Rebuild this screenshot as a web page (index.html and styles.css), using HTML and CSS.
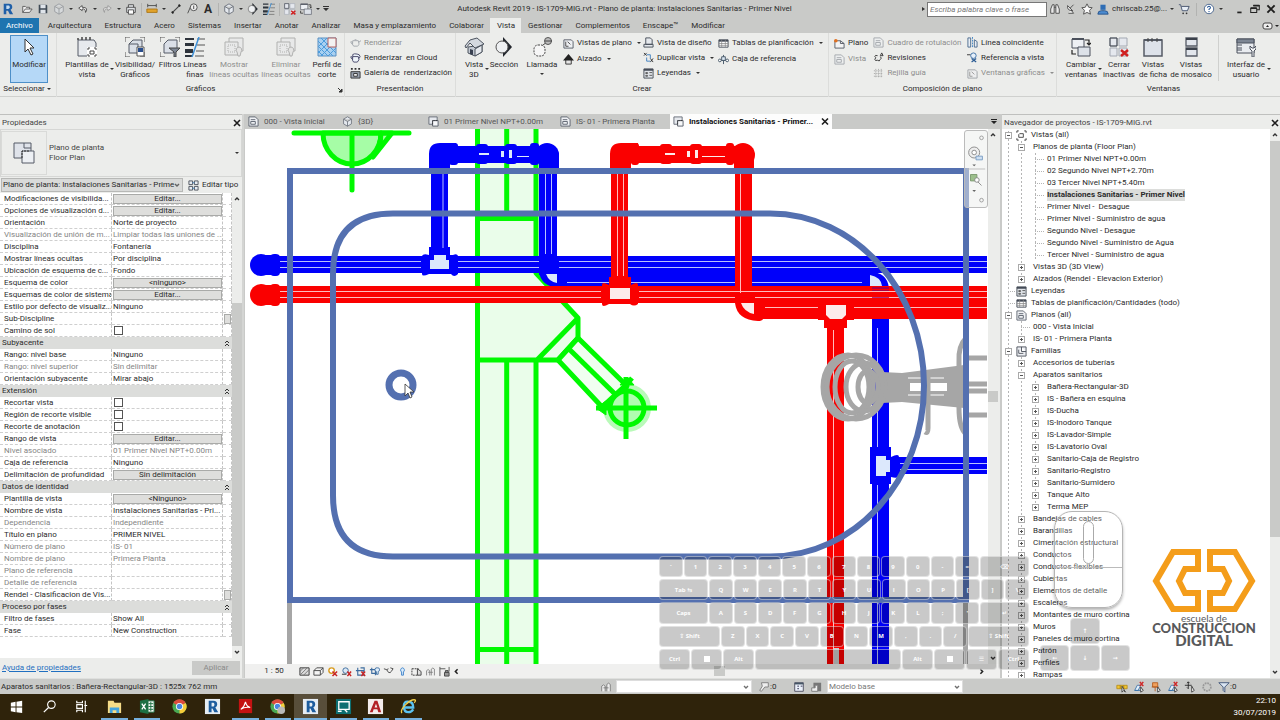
FILE: index.html
```html
<!DOCTYPE html>
<html lang="es">
<head>
<meta charset="utf-8">
<title>Autodesk Revit 2019 - IS-1709-MIG.rvt</title>
<link rel="stylesheet" href="styles.css">
</head>
<body>
<svg class="defs" aria-hidden="true">
  <symbol id="rlogo" viewBox="0 0 14 14"><path d="M2 1h6q4 0 4 4 0 2-2 3l3 5H9L7 9H5v4H2z" fill="#1f5fa8"/><path d="M5 3h3q1 0 1 2T7 7H5z" fill="#c6dcf0"/></symbol>
  <symbol id="open" viewBox="0 0 14 14"><path d="M2 11V4h3l1 1h4v2M2 11l3-4h8l-3 4z" fill="#eee" stroke="#555" stroke-width="1"/></symbol>
  <symbol id="save" viewBox="0 0 14 14"><path d="M2 2h9l1 1v9H2z" fill="#3f4a55"/><path d="M4 2h6v4H4zM4 8h6v4H4z" fill="#dfe4ea"/></symbol>
  <symbol id="cube" viewBox="0 0 14 14"><path d="M7 1l5 3v6l-5 3-5-3V4zM2 4l5 3 5-3M7 7v6" fill="#e4e8ee" stroke="#666c76" stroke-width="1"/></symbol>
  <symbol id="undo" viewBox="0 0 14 14"><path d="M6 3L2 6l4 3V7q4-1 4 4 4-6-4-6z" fill="#f5f5f5" stroke="#444" stroke-width="1"/></symbol>
  <symbol id="redo" viewBox="0 0 14 14"><path d="M8 3l4 3-4 3V7q-4-1-4 4-4-6 4-6z" fill="#ddd" stroke="#999" stroke-width="1"/></symbol>
  <symbol id="print" viewBox="0 0 14 14"><path d="M4 5V2h6v3M2 5h10v6H2z" fill="#dfe2e6" stroke="#444"/><path d="M4 8h6v5H4z" fill="#fff" stroke="#444"/></symbol>
  <symbol id="measure" viewBox="0 0 14 14"><path d="M2 3h10M2 1v4M12 1v4" stroke="#444"/><path d="M1 7h12v4H1z" fill="#e2a32b" stroke="#a87414"/></symbol>
  <symbol id="dimline" viewBox="0 0 14 14"><path d="M3 11l8-8" stroke="#444" stroke-width="1.3"/><path d="M2 10l2 2M10 2l2 2" stroke="#222" stroke-width="2"/></symbol>
  <symbol id="tag" viewBox="0 0 14 14"><path d="M2 12l3-7h2" fill="none" stroke="#444"/><circle cx="9" cy="5" r="4" fill="#eee" stroke="#444"/><path d="M9 3v4" stroke="#333"/></symbol>
  <symbol id="house" viewBox="0 0 20 20"><path d="M4 10v6l7 3 7-4V8z" fill="#c3c9d2" stroke="#4d545f"/><path d="M11 12v7l7-4V8z" fill="#e6e9ee" stroke="#4d545f"/><path d="M1 9l5-6 7-2 7 6-9 4-5-5-4 5z" fill="#d3d8df" stroke="#4d545f"/><path d="M6 12v5l3 1v-5z" fill="#384050"/></symbol>
  <symbol id="section" viewBox="0 0 20 20"><path d="M9 0l9 10-9 10z" fill="#22262d"/><circle cx="8" cy="10" r="6" fill="#eef0f2" stroke="#555"/></symbol>
  <symbol id="thin" viewBox="0 0 20 20"><path d="M0 1h9v2H0zM0 6h9v3H0zM0 12h8v4H0zM0 18h7v2H0z" fill="#2e343c"/><path d="M12 2h8M12 8h8M11 14h8M10 19h9" stroke="#555"/><path d="M14 0L7 20" stroke="#3d8fd6" stroke-width="1.500"/></symbol>
  <symbol id="closew" viewBox="0 0 20 20"><path d="M1 1h7v8H1zM10 1h8v8h-8zM1 11h7v8H1zM10 11h8v8h-8z" fill="#e5e8ee" stroke="#a3a8b2"/><path d="M1 1h7v8H1z" fill="none" stroke="#3c424c"/><path d="M12 13l7 6M19 13l-7 6" stroke="#d02020" stroke-width="2.500"/></symbol>
  <symbol id="switchw" viewBox="0 0 20 20"><path d="M1 2h12v9H1z" fill="#edf0f4" stroke="#4b515c"/><path d="M1 1h12v2H1z" fill="#4b515c"/><path d="M7 10h12v9H7z" fill="#dde2e9" stroke="#4b515c"/><path d="M14 3h4v5M16 6l2 2 2-2M5 17H1v-4" fill="none" stroke="#222" stroke-width="1.200"/></symbol>
  <symbol id="tpl" viewBox="0 0 20 20"><path d="M1 3h16l2 3v13H1z" fill="#e6e9ed" stroke="#555b66"/><path d="M1 3v-2M5 3V0M9 3V0M13 3V0" stroke="#444" stroke-width="1.500"/><path d="M10 10h10v10H10z" fill="#fff"/><path d="M11 13V11h2M17 11h2v2M11 17v2h2M19 17v2h-2M13 14h4v3h-4z" fill="none" stroke="#444"/></symbol>
  <symbol id="vis" viewBox="0 0 20 20"><path d="M0 5V0h5M15 0h5v5M0 15v5h5M20 15v5h-5" fill="none" stroke="#555"/><path d="M4 7l4-4h9v9l-4 4H4z" fill="#dadfe7" stroke="#555b66"/><path d="M4 7h9v9" fill="none" stroke="#555b66"/><path d="M12 10h7v9h-7z" fill="#fff" stroke="#555"/><path d="M13 11h5v4h-5z" fill="#2a4e8c"/></symbol>
  <symbol id="filter" viewBox="0 0 20 20"><path d="M0 5V0h5M15 0h5v5M0 15v5h5" fill="none" stroke="#555"/><path d="M4 7l4-4h9v9l-4 4H4z" fill="#dadfe7" stroke="#555b66"/><path d="M9 11h11l-4 4v5h-2v-5z" fill="#7d8694" stroke="#444"/></symbol>
  <symbol id="hid" viewBox="0 0 20 20"><path d="M5 5V1h14v13h-4M1 5h13v13H1z" fill="#e6e7e8" stroke="#777"/><path d="M4 8h7v7H4z" fill="none" stroke="#777" stroke-dasharray="1 1"/><path d="M15 10a3 3 0 0 1 2 5l-1 4h-2l-1-4a3 3 0 0 1 2-5z" fill="#ddd" stroke="#777"/></symbol>
  <symbol id="profile" viewBox="0 0 20 20"><path d="M1 1h18v18H1z" fill="#a9d0f0" stroke="#5b8fc0"/><path d="M1 4l15 15M1 9l10 10M1 14l5 5M4 1l15 15M1 10l9-9M1 16L16 1M4 19L19 4M11 19l8-8" stroke="#4c9cdc" stroke-width="1"/><path d="M11 1h8v9h-8z" fill="#f2f2f2" stroke="#b06060"/></symbol>
  <symbol id="callout" viewBox="0 0 20 20"><rect x="2" y="8" width="11" height="11" rx="4" fill="#f6f6f6" stroke="#444" stroke-dasharray="2 1"/><path d="M11 8l4-3" stroke="#444"/><circle cx="16" cy="4" r="3.500" fill="#bbb" stroke="#555"/><path d="M13 4h7" stroke="#444"/></symbol>
  <symbol id="tabsw" viewBox="0 0 20 20"><path d="M1 3h18v16H1z" fill="#dde2ea" stroke="#555b66" stroke-width="1.500"/><path d="M1 3h18" stroke="#555b66" stroke-width="2"/><path d="M5 1v4M9 1v4M14 1v4" stroke="#444"/></symbol>
  <symbol id="tilew" viewBox="0 0 20 20"><path d="M5 1h11v8H5zM5 11h11v8H5z" fill="#e2e6ec" stroke="#555b66" stroke-width="1.300"/><path d="M5 2h11M5 12h11" stroke="#3b414b" stroke-width="2"/></symbol>
  <symbol id="iface" viewBox="0 0 20 20"><path d="M1 2h17v14H1z" fill="#e9ecf0" stroke="#4b515c"/><path d="M1 2h17v4H1zM1 8h5M1 11h5M1 13h5" stroke="#4b515c" fill="#7d8694"/><path d="M14 9v3l2 2v6h2v-6l2-2V9l-2 2h-2z" fill="#f3f5f7" stroke="#4b515c"/></symbol>
  <symbol id="arrow" viewBox="0 0 20 20"><path d="M6 2v13l3-3 3 6 2-1-3-6h4z" fill="#fff" stroke="#333"/></symbol>
  <symbol id="teapot" viewBox="0 0 12 12"><path d="M3 4h6q2 5-1 6H4Q2 9 3 4zM3 6Q0 4 1 6t2 2M9 6l3-2M5 3h2" fill="none" stroke="#5b6470"/></symbol>
  <symbol id="cloudpot" viewBox="0 0 12 12"><path d="M3 5Q2 2 5 2t5 1q2 2 0 4M3 5h6q2 4-1 6H4Q2 10 3 5zM3 6Q0 4 1 6t2 2" fill="#eef4fa" stroke="#446"/></symbol>
  <symbol id="gallery" viewBox="0 0 12 12"><path d="M1 1h2M5 1h2M9 1h2" stroke="#333" stroke-width="2"/><path d="M1 4h10v7H1z" fill="#9aa3b0" stroke="#333"/><path d="M4 6h4v3H4z" fill="#eee" stroke="#333"/></symbol>
  <symbol id="plan" viewBox="0 0 12 12"><path d="M1 2h8l2 2v7H1z" fill="#eef0f3" stroke="#555b66"/><path d="M3 4v5h3M5 4l3 3" fill="none" stroke="#444"/></symbol>
  <symbol id="elev" viewBox="0 0 12 12"><path d="M3 6h6v5H3z" fill="#e5e5e5" stroke="#333"/><path d="M6 0l6 7H0z" fill="#222"/></symbol>
  <symbol id="draft" viewBox="0 0 12 12"><path d="M3 1h5l2 2v5H3zM1 8h10v3H1z" fill="#e6e9ed" stroke="#444b57"/></symbol>
  <symbol id="dup" viewBox="0 0 12 12"><path d="M1 1l3 3M4 1L1 4M8 7l3 4M11 7l-3 4" stroke="#333"/><path d="M4 3h4v4M4 6v4h4" fill="none" stroke="#3d7fc0"/></symbol>
  <symbol id="legend" viewBox="0 0 12 12"><path d="M1 1h10v10H1z" fill="#dfe3e8" stroke="#444b57"/><path d="M1 2h10" stroke="#444b57" stroke-width="2"/><path d="M3 5h2v1H3zM3 8h2v1H3zM7 5h3M7 8h3" stroke="#555" fill="none"/></symbol>
  <symbol id="sched" viewBox="0 0 12 12"><path d="M1 2h10v8H1z" fill="#fff" stroke="#444b57"/><path d="M1 3h10" stroke="#444b57" stroke-width="2"/><path d="M1 6h10M1 8h10M4 2v8M8 2v8" stroke="#888" stroke-width=".8"/></symbol>
  <symbol id="scope" viewBox="0 0 12 12"><path d="M6 1v10M1 7h10" stroke="#456"/><path d="M4 3h4v4H4z" fill="#dce8f4" stroke="#456"/><circle cx="2" cy="7" r="1.500" fill="#fff" stroke="#456"/><circle cx="10" cy="7" r="1.500" fill="#fff" stroke="#456"/></symbol>
  <symbol id="sheet" viewBox="0 0 12 12"><path d="M1 3h6l4 3v5H1z" fill="#f4f4f4" stroke="#555b66"/><path d="M7 3v3h4" fill="none" stroke="#555b66"/><circle cx="2" cy="3" r="2" fill="#e07020"/></symbol>
  <symbol id="sheetp" viewBox="0 0 12 12"><path d="M1 1h7l3 3v7H1z" fill="#eff1f4" stroke="#5d6470"/><path d="M3 4h5M3 6v3h5V6z" fill="none" stroke="#5d6470"/></symbol>
  <symbol id="rev" viewBox="0 0 12 12"><path d="M5 4q-3-1-3 1 2 1 0 3 0 2 3 1 2 2 3-1 2-1 0-3" fill="none" stroke="#333"/><path d="M8 4l1.500-3L11 4z" fill="#fafafa" stroke="#333"/></symbol>
  <symbol id="grid" viewBox="0 0 12 12"><path d="M3 1v10M6 1v10M9 1v10M1 3h10M1 6h10M1 9h10" stroke="#555" stroke-dasharray="1 1"/></symbol>
  <symbol id="match" viewBox="0 0 12 12"><path d="M1 1h3v10H1zM8 3l3 2v6H8z" fill="#e8eef5" stroke="#4a6a8c"/><path d="M6 0v12" stroke="#3b82c4" stroke-dasharray="2 1"/></symbol>
  <symbol id="vref" viewBox="0 0 12 12"><path d="M0 3h4" stroke="#333"/><circle cx="7" cy="4" r="3" fill="#e6f0fa" stroke="#3b6ea5"/><path d="M5 7l5 4M10 7l-5 4" stroke="#2b5c94" stroke-width="1.300"/></symbol>
  <symbol id="bino" viewBox="0 0 14 14"><path d="M2 12V7l2-5h2v10zM8 12V2h2l2 5v5zM6 5h2" fill="#e9e9e9" stroke="#444"/></symbol>
  <symbol id="dish" viewBox="0 0 14 14"><path d="M3 3q-1 6 6 6zM6 6l4-4M4 12h6l-3-4" fill="#eee" stroke="#444"/></symbol>
  <symbol id="star" viewBox="0 0 14 14"><path d="M7 1l2 4 4 .500-3 3 1 4.500-4-2-4 2 1-4.500-3-3L5 5z" fill="#fafafa" stroke="#444"/></symbol>
  <symbol id="user" viewBox="0 0 14 14"><path d="M4 2h6v6H4z" fill="#2e6db5"/><path d="M1 13q0-4 4-4h4q4 0 4 4z" fill="#4c8bd0" stroke="#234f86"/></symbol>
  <symbol id="cart" viewBox="0 0 14 14"><path d="M1 2h2l2 7h6l2-5H4" fill="#e8eef6" stroke="#3c4a66"/><circle cx="6" cy="12" r="1" fill="#333"/><circle cx="10" cy="12" r="1" fill="#333"/></symbol>
  <symbol id="help" viewBox="0 0 14 14"><circle cx="7" cy="7" r="5.500" fill="#fff" stroke="#3c5a86"/><path d="M5.200 5.500Q5.500 3.700 7 3.700t1.700 1.600Q8.700 6.500 7 7.300v1" fill="none" stroke="#1d4f92" stroke-width="1.200"/><circle cx="7" cy="10" r=".8" fill="#1d4f92"/></symbol>
  <symbol id="restore" viewBox="0 0 14 14"><path d="M5 3h7v5H9M2 6h7v5H2z" fill="none" stroke="#222" stroke-width="1.200"/><path d="M5 3h7M2 6h7" stroke="#222" stroke-width="2"/></symbol>
  <symbol id="x" viewBox="0 0 10 10"><path d="M2 2l6 6M8 2L2 8" stroke="#1d1d1d" stroke-width="1.600"/></symbol>
  <symbol id="up" viewBox="0 0 10 10"><path d="M3 6l2-2 2 2" fill="none" stroke="#333" stroke-width="1.400"/></symbol>
  <symbol id="down" viewBox="0 0 10 10"><path d="M3 4l2 2 2-2" fill="none" stroke="#333" stroke-width="1.400"/></symbol>
  <symbol id="tri" viewBox="0 0 8 8"><path d="M2 3h4L4 5z" fill="#333"/></symbol>
  <symbol id="chev2" viewBox="0 0 8 8"><path d="M2 4l2-2 2 2M2 7l2-2 2 2" fill="none" stroke="#333"/></symbol>
  <symbol id="etype" viewBox="0 0 12 12"><path d="M1 1h4v4H1zM7 1h4v4H7zM1 7h4v4H1zM7 7h4v4H7z" fill="#e8ecf2" stroke="#4b515c"/><path d="M5 3h2M5 9h2" stroke="#3b82c4"/></symbol>
  <symbol id="views" viewBox="0 0 12 12"><path d="M1 3V1h2M9 1h2v2M1 9v2h2M11 9v2H9" fill="none" stroke="#333"/><path d="M3 5l1-1h4v4H3z" fill="#fff" stroke="#444"/></symbol>
  <symbol id="fam" viewBox="0 0 12 12"><path d="M1 1h10v10H1zM6 1v5h5M3 4v4h5" fill="#eceef2" stroke="#4b515c"/></symbol>
  <symbol id="fplan" viewBox="0 0 12 12"><path d="M1 1h9v8H1z" fill="#e6e9ee" stroke="#666c77"/><path d="M5 5h6v6H5z" fill="#f7f8fa" stroke="#555b66"/><path d="M5 9V5h5" fill="none" stroke="#222" stroke-dasharray="1 1"/></symbol>
  <symbol id="box" viewBox="0 0 12 12"><path d="M1 5l3-3h7v5l-3 3H1zM1 5h7v5M8 5l3-3" fill="#f4f4f4" stroke="#444"/></symbol>
  <symbol id="detail" viewBox="0 0 12 12"><path d="M1 2h10v8H1z" fill="#ddd" stroke="#333"/><path d="M1 6l4-4M1 10l8-8M5 10l6-6" stroke="#777"/></symbol>
  <symbol id="sun" viewBox="0 0 12 12"><circle cx="5" cy="5" r="3" fill="#fff" stroke="#d99a1c" stroke-width="1.500"/><path d="M6 6l5 5M11 6l-5 5" stroke="#c82323" stroke-width="1.600"/></symbol>
  <symbol id="shadow" viewBox="0 0 12 12"><circle cx="5" cy="5" r="3" fill="#dce9f5" stroke="#3d6c9f"/><path d="M1 9h5" stroke="#333"/><path d="M7 6l4 5M11 6l-4 5" stroke="#c82323" stroke-width="1.600"/></symbol>
  <symbol id="cropx" viewBox="0 0 12 12"><path d="M1 5h8v5M3 2v8h8M6 2h4v4" fill="none" stroke="#3d6c9f" stroke-width="1.200"/><path d="M7 6l4 5M11 6l-4 5" stroke="#c82323" stroke-width="1.600"/></symbol>
  <symbol id="crop" viewBox="0 0 12 12"><path d="M1 4h6v6M3 2v6h6" fill="none" stroke="#3d6c9f" stroke-width="1.200"/><path d="M9 2a2 2 0 0 1 1 4v3H8V6a2 2 0 0 1 1-4z" fill="#e0effb" stroke="#3d6c9f"/></symbol>
  <symbol id="glass" viewBox="0 0 12 12"><path d="M1 3l3 1 2 3q2 1 3-1l2-3-3-1M4 4l2-1" fill="none" stroke="#444"/></symbol>
  <symbol id="bulb" viewBox="0 0 12 12"><path d="M6 2a2.500 2.500 0 0 1 1 4.500V10H5V6.500A2.500 2.500 0 0 1 6 2z" fill="#d9ecfc" stroke="#3a80c8"/></symbol>
  <symbol id="dots" viewBox="0 0 12 12"><path d="M1 3h7v7H1z" fill="none" stroke="#333" stroke-dasharray="2 1"/><path d="M7 3l4 3v4H7z" fill="#ddd" stroke="#444"/></symbol>
  <symbol id="lock" viewBox="0 0 12 12"><path d="M1 1v10M1 3h6M11 1v5" stroke="#555"/><path d="M6 7h5v4H6zM7 7V5h3v2" fill="#999" stroke="#444"/></symbol>
  <symbol id="people" viewBox="0 0 14 14"><path d="M2 12V6q2-3 4 0v6M8 12V4q2-3 4 0v8M4 8h6" fill="#eee" stroke="#777"/></symbol>
  <symbol id="key" viewBox="0 0 14 14"><path d="M4 2h8v5H8l-4 5-2-1 3-5z" fill="#eee" stroke="#777"/></symbol>
  <symbol id="wins" viewBox="0 0 14 14"><path d="M2 2h10v10H2z" fill="#eaf0fa" stroke="#445"/><path d="M2 3h10" stroke="#456" stroke-width="2"/><path d="M5 6h2M5 9h2M9 6h2" stroke="#224"/></symbol>
  <symbol id="optset" viewBox="0 0 14 14"><path d="M4 2h9v10H4z" fill="#777"/><path d="M2 8h4V5h3v7H2z" fill="#eee" stroke="#777"/></symbol>
  <symbol id="chain" viewBox="0 0 14 14"><path d="M1 5h4v4H1zM5 5h4v4H5zM9 5h4v4H9z" fill="#f3c530" stroke="#b58d1c"/><path d="M7 6v7l2-2 2 2z" fill="#fff" stroke="#333"/></symbol>
  <symbol id="selx" viewBox="0 0 14 14"><path d="M2 11l3-6h4l-3 6zM2 11h9" fill="#e5f0fa" stroke="#3872aa"/><path d="M8 1l4 5M12 1L8 6" stroke="#cf2727" stroke-width="1.800"/><path d="M9 7v6l3-2z" fill="#fff" stroke="#333"/></symbol>
  <symbol id="pin" viewBox="0 0 14 14"><path d="M3 2h6v5H3zM2 7h8M6 7v5" fill="#f0a05c" stroke="#b35a1d"/><path d="M9 7v6l3-2z" fill="#fff" stroke="#333"/></symbol>
  <symbol id="drag" viewBox="0 0 14 14"><path d="M5 1v8M1 5h8M3.500 2.500L5 1l1.500 1.500M3.500 7.500L5 9" fill="none" stroke="#222"/><path d="M9 6v7l3-2z" fill="#fff" stroke="#333"/></symbol>
  <symbol id="ring" viewBox="0 0 14 14"><circle cx="7" cy="7" r="4.500" fill="none" stroke="#999" stroke-width="2" stroke-dasharray="2 1"/></symbol>
  <symbol id="funnel" viewBox="0 0 14 14"><path d="M1 2h12L8 7v6l-2-2V7z" fill="#dbe6f3" stroke="#334a70"/></symbol>
  <symbol id="chrome" viewBox="0 0 18 18"><circle cx="9" cy="9" r="7.500" fill="#4aa853"/><path d="M9 9L2.500 5.200A7.500 7.500 0 0 1 15.500 5.200z" fill="#dd4b3e"/><path d="M9 9l6.500-3.800A7.500 7.500 0 0 1 9 16.500z" fill="#f6cd3a"/><circle cx="9" cy="9" r="3.800" fill="#fff"/><circle cx="9" cy="9" r="2.900" fill="#4a86e0"/></symbol>
  <symbol id="revit" viewBox="0 0 18 18"><path d="M1 1h16v16H1z" fill="#e6edf4"/><path d="M5 3h5q4 0 4 4 0 2-2 3l3 5h-4l-2-4H8v4H5z" fill="#1c5c9e"/><path d="M8 5h2q1 0 1 2t-1 2H8z" fill="#e6edf4"/></symbol>
</svg>

<header class="titlebar">
  <div class="qat">
    <button aria-label="Revit"><svg><use href="#rlogo"/></svg></button><span class="s3"></span>
    <button aria-label="Abrir"><svg><use href="#open"/></svg></button>
    <button aria-label="Guardar"><svg><use href="#save"/></svg></button>
    <button class="dis" aria-label="Sincronizar"><svg><use href="#cube"/></svg></button>
    <button class="ar" aria-label="Más"><svg><use href="#tri"/></svg></button>
    <button aria-label="Deshacer"><svg><use href="#undo"/></svg></button>
    <button class="ar" aria-label="Más"><svg><use href="#tri"/></svg></button>
    <button aria-label="Rehacer"><svg><use href="#redo"/></svg></button>
    <button class="ar" aria-label="Más"><svg><use href="#tri"/></svg></button>
    <button aria-label="Imprimir"><svg><use href="#print"/></svg></button><i class="sep"></i>
    <button aria-label="Medir"><svg><use href="#measure"/></svg></button>
    <button class="ar" aria-label="Más"><svg><use href="#tri"/></svg></button>
    <button aria-label="Cota"><svg><use href="#dimline"/></svg></button>
    <button aria-label="Etiqueta"><svg><use href="#tag"/></svg></button>
    <button class="big" aria-label="Texto">A</button><i class="sep"></i>
    <button aria-label="Vista 3D"><svg><use href="#cube"/></svg></button>
    <button class="ar" aria-label="Más"><svg><use href="#tri"/></svg></button>
    <button aria-label="Sección"><svg><use href="#section"/></svg></button>
    <button aria-label="Líneas finas"><svg><use href="#thin"/></svg></button><i class="sep"></i>
    <button aria-label="Cerrar inactivas"><svg><use href="#closew"/></svg></button>
    <button aria-label="Cambiar ventanas"><svg><use href="#switchw"/></svg></button>
    <button class="ar" aria-label="Más"><svg><use href="#tri"/></svg></button>
    <button class="ar" aria-label="Personalizar"><svg viewBox="0 0 8 8"><path d="M1 1h6v1H1zM1 3h6L4 6z" fill="#333"/></svg></button>
  </div>
  <h1>Autodesk Revit 2019 - IS-1709-MIG.rvt - Plano de planta: Instalaciones Sanitarias - Primer Nivel</h1>
  <div class="info">
    <svg class="tiny" viewBox="0 0 8 8"><path d="M3 2l3 2-3 2z" fill="#333"/></svg>
    <input type="search" placeholder="Escriba palabra clave o frase" aria-label="Buscar">
    <button aria-label="Buscar"><svg><use href="#bino"/></svg></button>
    <button aria-label="Comunicación"><svg><use href="#dish"/></svg></button>
    <button aria-label="Favoritos"><svg><use href="#star"/></svg></button>
    <button aria-label="Usuario"><svg><use href="#user"/></svg></button>
    <span class="usr">chriscab.25@...</span>
    <button class="ar" aria-label="Cuenta"><svg><use href="#tri"/></svg></button>
    <button aria-label="Tienda"><svg><use href="#cart"/></svg></button><i class="sep"></i>
    <button aria-label="Ayuda"><svg><use href="#help"/></svg></button>
    <button class="ar" aria-label="Más"><svg><use href="#tri"/></svg></button>
    <span class="s6"></span>
    <button aria-label="Minimizar"><svg viewBox="0 0 14 14"><path d="M5 11h5" stroke="#222" stroke-width="2"/></svg></button>
    <button aria-label="Restaurar"><svg><use href="#restore"/></svg></button>
    <button aria-label="Cerrar"><svg><use href="#x"/></svg></button>
  </div>
</header>

<nav class="tabs">
  <button class="file">Archivo</button><button>Arquitectura</button><button>Estructura</button><button>Acero</button><button>Sistemas</button><button>Insertar</button><button>Anotar</button><button>Analizar</button><button>Masa y emplazamiento</button><button>Colaborar</button><button class="on">Vista</button><button>Gestionar</button><button>Complementos</button><button>Enscape™</button><button>Modificar</button>
  <svg class="pill" viewBox="0 0 18 10"><rect x="1" y="2" width="9" height="6" rx="2" fill="#eee" stroke="#444"/><path d="M4 6l1.500-2L7 6zM13 4h4l-2 2z" fill="#222"/></svg>
</nav>

<section class="ribbon">
  <div class="rp"><div class="rb">
    <button class="lg w38 cur"><svg><use href="#arrow"/></svg><span>Modificar</span></button>
  </div><h2>Seleccionar <svg class="t8"><use href="#tri"/></svg></h2></div>

  <div class="rp"><div class="rb">
    <button class="lg w50"><svg><use href="#tpl"/></svg><span>Plantillas de<br>vista</span><svg class="t8 side"><use href="#tri"/></svg></button>
    <button class="lg w46"><svg><use href="#vis"/></svg><span>Visibilidad/<br>Gráficos</span></button>
    <button class="lg w24"><svg><use href="#filter"/></svg><span>Filtros</span></button>
    <button class="lg w26"><svg><use href="#thin"/></svg><span>Líneas<br>finas</span></button>
    <button class="lg w52 off" disabled><svg><use href="#hid"/></svg><span>Mostrar<br>líneas ocultas</span></button>
    <button class="lg w52 off" disabled><svg><use href="#hid"/></svg><span>Eliminar<br>líneas ocultas</span></button>
    <button class="lg w30"><svg><use href="#profile"/></svg><span>Perfil de<br>corte</span></button>
  </div><h2>Gráficos</h2><svg class="launch" viewBox="0 0 6 6"><path d="M1 1l3 3M5 2v3H2z" stroke="#333" fill="#333"/></svg></div>

  <div class="rp"><div class="rb">
    <div class="col">
      <button class="off" disabled><svg><use href="#teapot"/></svg>Renderizar</button>
      <button><svg><use href="#cloudpot"/></svg>Renderizar&nbsp; en Cloud</button>
      <button><svg><use href="#gallery"/></svg>Galería de&nbsp; renderización</button>
    </div>
  </div><h2>Presentación</h2></div>

  <div class="rp"><div class="rb">
    <button class="lg w26"><svg><use href="#house"/></svg><span>Vista<br>3D</span><svg class="t8 side"><use href="#tri"/></svg></button>
    <button class="lg w34"><svg><use href="#section"/></svg><span>Sección</span></button>
    <button class="lg w42"><svg><use href="#callout"/></svg><span>Llamada</span><svg class="t8"><use href="#tri"/></svg></button>
    <div class="col c80">
      <button><svg><use href="#plan"/></svg>Vistas de plano<svg class="t8"><use href="#tri"/></svg></button>
      <button><svg><use href="#elev"/></svg>Alzado<svg class="t8"><use href="#tri"/></svg></button>
    </div>
    <div class="col c75">
      <button><svg><use href="#draft"/></svg>Vista de diseño</button>
      <button><svg><use href="#dup"/></svg>Duplicar vista<svg class="t8"><use href="#tri"/></svg></button>
      <button><svg><use href="#legend"/></svg>Leyendas<svg class="t8"><use href="#tri"/></svg></button>
    </div>
    <div class="col">
      <button><svg><use href="#sched"/></svg>Tablas de planificación<svg class="t8"><use href="#tri"/></svg></button>
      <button><svg><use href="#scope"/></svg>Caja de referencia</button>
    </div>
  </div><h2>Crear</h2></div>

  <div class="rp"><div class="rb">
    <div class="col c40">
      <button><svg><use href="#sheet"/></svg>Plano</button>
      <button class="off" disabled><svg><use href="#sheetp"/></svg>Vista</button>
    </div>
    <div class="col c95">
      <button class="off" disabled><svg><use href="#sheetp"/></svg>Cuadro de rotulación</button>
      <button><svg><use href="#rev"/></svg>Revisiones</button>
      <button class="off" disabled><svg><use href="#grid"/></svg>Rejilla guía</button>
    </div>
    <div class="col">
      <button><svg><use href="#match"/></svg>Línea coincidente</button>
      <button><svg><use href="#vref"/></svg>Referencia a vista</button>
      <button class="off" disabled><svg><use href="#plan"/></svg>Ventanas gráficas<svg class="t8"><use href="#tri"/></svg></button>
    </div>
  </div><h2>Composición de plano</h2></div>

  <div class="rp last"><div class="rb">
    <button class="lg w38"><svg><use href="#switchw"/></svg><span>Cambiar<br>ventanas</span><svg class="t8 side"><use href="#tri"/></svg></button>
    <button class="lg w38"><svg><use href="#closew"/></svg><span>Cerrar<br>inactivas</span></button>
    <button class="lg w30"><svg><use href="#tabsw"/></svg><span>Vistas<br>de ficha</span></button>
    <button class="lg w46"><svg><use href="#tilew"/></svg><span>Vistas<br>de mosaico</span></button>
    <i class="vsep"></i>
    <button class="lg w46"><svg><use href="#iface"/></svg><span>Interfaz de<br>usuario</span><svg class="t8 side"><use href="#tri"/></svg></button>
  </div><h2>Ventanas</h2></div>
</section>

<main>
  <aside class="props">
    <header class="ph"><h2>Propiedades</h2><button aria-label="Cerrar propiedades"><svg><use href="#x"/></svg></button></header>
    <button class="type">
      <span class="thumb"><svg viewBox="0 0 22 22"><path d="M1 1h17v15H1z" fill="#dfe3ea" stroke="#555b66"/><path d="M11 1v5h7" fill="none" stroke="#555b66"/><path d="M9 9h12v12H9z" fill="#edf0f4" stroke="#555b66"/><path d="M9 16V9h8" fill="none" stroke="#333" stroke-dasharray="2 1"/></svg></span>
      <span class="tn">Plano de planta<br>Floor Plan</span><svg class="t8"><use href="#tri"/></svg>
    </button>
    <div class="inst">
      <span class="combo"><select aria-label="Instancia"><option>Plano de planta: Instalaciones Sanitarias - Prime</option></select><svg><use href="#down"/></svg></span>
      <button><svg><use href="#etype"/></svg>Editar tipo</button>
    </div>
    <div class="pbody">
      <div class="tablewrap">
      <table>
        <colgroup><col class="k"><col class="v"><col class="b"></colgroup>
        <tr><th>Modificaciones de visibilida...</th><td><button>Editar...</button></td><td></td></tr>
        <tr><th>Opciones de visualización d...</th><td><button>Editar...</button></td><td></td></tr>
        <tr><th>Orientación</th><td>Norte de proyecto</td><td></td></tr>
        <tr class="ro"><th>Visualización de unión de m...</th><td>Limpiar todas las uniones de ...</td><td></td></tr>
        <tr><th>Disciplina</th><td>Fontanería</td><td></td></tr>
        <tr><th>Mostrar líneas ocultas</th><td>Por disciplina</td><td></td></tr>
        <tr><th>Ubicación de esquema de c...</th><td>Fondo</td><td></td></tr>
        <tr><th>Esquema de color</th><td><button>&lt;ninguno&gt;</button></td><td></td></tr>
        <tr><th>Esquemas de color de sistema</th><td><button>Editar...</button></td><td></td></tr>
        <tr><th>Estilo por defecto de visualiz...</th><td>Ninguno</td><td></td></tr>
        <tr><th>Sub-Discipline</th><td></td><td><button aria-label="Asociar"></button></td></tr>
        <tr><th><label for="c1">Camino de sol</label></th><td><input type="checkbox" id="c1"></td><td></td></tr>
        <tr class="g"><th colspan="2">Subyacente</th><td><svg><use href="#chev2"/></svg></td></tr>
        <tr><th>Rango: nivel base</th><td>Ninguno</td><td></td></tr>
        <tr class="ro"><th>Rango: nivel superior</th><td>Sin delimitar</td><td></td></tr>
        <tr><th>Orientación subyacente</th><td>Mirar abajo</td><td></td></tr>
        <tr class="g"><th colspan="2">Extensión</th><td><svg><use href="#chev2"/></svg></td></tr>
        <tr><th><label for="c2">Recortar vista</label></th><td><input type="checkbox" id="c2"></td><td></td></tr>
        <tr><th><label for="c3">Región de recorte visible</label></th><td><input type="checkbox" id="c3"></td><td></td></tr>
        <tr><th><label for="c4">Recorte de anotación</label></th><td><input type="checkbox" id="c4"></td><td></td></tr>
        <tr><th>Rango de vista</th><td><button>Editar...</button></td><td></td></tr>
        <tr class="ro"><th>Nivel asociado</th><td>01 Primer Nivel NPT+0.00m</td><td></td></tr>
        <tr><th>Caja de referencia</th><td>Ninguno</td><td></td></tr>
        <tr><th>Delimitación de profundidad</th><td><button>Sin delimitación</button></td><td></td></tr>
        <tr class="g"><th colspan="2">Datos de identidad</th><td><svg><use href="#chev2"/></svg></td></tr>
        <tr><th>Plantilla de vista</th><td><button>&lt;Ninguno&gt;</button></td><td></td></tr>
        <tr><th>Nombre de vista</th><td>Instalaciones Sanitarias - Pri...</td><td></td></tr>
        <tr class="ro"><th>Dependencia</th><td>Independiente</td><td></td></tr>
        <tr><th>Título en plano</th><td>PRIMER NIVEL</td><td></td></tr>
        <tr class="ro"><th>Número de plano</th><td>IS- 01</td><td></td></tr>
        <tr class="ro"><th>Nombre de plano</th><td>Primera Planta</td><td></td></tr>
        <tr class="ro"><th>Plano de referencia</th><td></td><td></td></tr>
        <tr class="ro"><th>Detalle de referencia</th><td></td><td></td></tr>
        <tr><th>Rendel - Clasificacion de Vis...</th><td></td><td><button aria-label="Asociar"></button></td></tr>
        <tr class="g"><th colspan="2">Proceso por fases</th><td><svg><use href="#chev2"/></svg></td></tr>
        <tr><th>Filtro de fases</th><td>Show All</td><td></td></tr>
        <tr><th>Fase</th><td>New Construction</td><td></td></tr>
      </table>
      </div>
      <div class="sb"><svg><use href="#up"/></svg><i class="gap"></i><i class="th"></i><svg><use href="#down"/></svg></div>
    </div>
    <footer class="pf"><a href="#ayuda">Ayuda de propiedades</a><button disabled>Aplicar</button></footer>
  </aside>

  <section class="work">
    <div class="vtabs">
      <button><svg><use href="#sheetp"/></svg>000 - Vista Inicial</button>
      <button><svg><use href="#cube"/></svg>{3D}</button>
      <button><svg><use href="#fplan"/></svg>01 Primer Nivel NPT+0.00m</button>
      <button><svg><use href="#sheetp"/></svg>IS- 01 - Primera Planta</button>
      <button class="on"><svg><use href="#fplan"/></svg>Instalaciones Sanitarias - Primer...<svg class="cl"><use href="#x"/></svg></button>
      <svg class="more" viewBox="0 0 8 8"><path d="M1 1h6v1H1zM1 3h6L4 6z" fill="#222"/></svg>
    </div>
    <div class="cv">
      <svg class="draw" viewBox="245 129 743 535" preserveAspectRatio="xMinYMin slice" role="img" aria-label="Plano de instalaciones sanitarias">
        <g stroke="#00f900" stroke-width="5" fill="none" stroke-linejoin="round">
          <path d="M323 133a29 31 0 0 0 58 0z" fill="#a6fda6"/>
          <path d="M381 133h11l-19 24q8-11 8-24z" fill="#a6fda6"/>
          <path d="M294 133h115M352 133v57M379 133h14" stroke-linecap="round"/>
          <path d="M477 120h59v153l42 45v20l-20 22h-22v310h-59z" fill="#eafdea" stroke="none"/>
          <path d="M477.500 120v550M536 120v153l42 45v20l-20 22h-81M536 360v310M506.700 120v91M506.700 360v310M477 218.500h59M578 318l-41 42M477 649.500h59"/>
          <circle cx="627" cy="408" r="24" fill="#b9fab9" stroke="none"/>
          <path d="M578 338l49 48-24 22-45-48z" fill="#f0fff0"/>
          <path d="M568 348l47 46"/>
          <circle cx="627" cy="408" r="17" fill="#b0fdb0"/>
          <path d="M596 408h61M626 377v62M601 408l26-24 5-6"/>
          <path d="M620 385l7-8 7 8zM596 408l10-7v14z" fill="#00f900" stroke-width="1"/>
        </g>
        <g fill="#0000fa">
          <circle cx="261" cy="265" r="11"/><rect x="261" y="255" width="17" height="20"/><rect x="270" y="254" width="10" height="22" rx="4"/>
          <path d="M278 256h709v17H278z"/><path d="M558 272h318v15H558z"/>
          <path d="M429 168v-14q0-11 11-11h16v3h87q16-2 16 10v12h-20v-5H450v5z"/>
          <rect x="449" y="143" width="9" height="22" rx="3"/><rect x="476" y="144" width="12" height="20" rx="3"/><rect x="505" y="144" width="12" height="20" rx="3"/><rect x="530" y="143" width="9" height="22" rx="3"/><circle cx="547" cy="155" r="12"/>
          <path d="M431 160h17v90h-17zM539 160h18v115h-18z"/>
          <path d="M429 247h21v8h3q5-2 5 2v17q-4 4-7 0h-22q-7 3-7 0v-17q0-4 7-2z"/>
          <path d="M539 272q2 14 19 16h5v-16zM870 272q17 0 19 16v14h-17z"/>
          <path d="M872 290h17v380h-17z"/>
          <path d="M870 447h21v10q8-4 8 0v18q0 4-8 2v7h-21z"/><path d="M898 457h89v17h-89z"/>
        </g>
        <g fill="#dce8fc">
          <path d="M434 255h12v5h3v9h-19v-9h4zM546 274h11v9q-8-1-11-9zM870 275q11 2 12 11h-12zM876 456h10v4h4v12h-4v4h-10z"/>
          <path d="M479 153h10v2h-10zM501 151h3v6h-3zM509 150h3v8h-3zM517 156h12v1h-12z"/>
        </g>
        <path d="M280 261.500h141M280 267.500h141M458 261.500h81M458 267.500h81M559 261.500h428M559 267.500h428M567 282.500h295M443 168v80M545.500 168v86M551.500 168v86M877.500 328v119M877.500 485v180M900 463.500h87M900 469.500h87" stroke="#b9c2ff" fill="none"/>
        <g fill="#fa0000">
          <circle cx="261" cy="295" r="11"/><rect x="261" y="285" width="17" height="20"/><rect x="270" y="284" width="10" height="22" rx="4"/>
          <path d="M278 286h709v17H278z"/><path d="M754 302h233v17H754z"/>
          <path d="M610 168v-14q0-11 11-11h17v3h86q31-2 30 10v12h-20v-5H631v5z"/>
          <rect x="631" y="143" width="8" height="22" rx="3"/><rect x="660" y="144" width="12" height="20" rx="3"/><rect x="690" y="144" width="12" height="20" rx="3"/><rect x="726" y="143" width="8" height="22" rx="3"/><circle cx="743" cy="155" r="12"/>
          <path d="M611 160h17v125h-17zM735 160h17v143h-17z"/>
          <path d="M609 277h22v8q7-4 7 0v19q-4 3-8 0h-21q-7 4-7 0v-19q0-4 7 0z"/>
          <path d="M735 303q2 17 23 18 4 0 5-2v-16z"/>
          <path d="M818 302h36v18h-7v8h-23v-8h-6z"/><path d="M827 328h17v340h-17z"/>
        </g>
        <path d="M610 288h20v11h-20zM741 303h13v11q-10-2-13-11zM826 305h20v10l-4 4h-12l-4-4z" fill="#fdeaea"/>
        <path d="M665 153h10v2h-10zM687 151h3v6h-3zM695 150h3v8h-3zM702 156h23v1h-23z" fill="#fdeaea"/>
        <path d="M280 291.500h321M280 297.500h321M639 291.500h348M639 297.500h96M755 297.500h232M765 307.500h53M854 307.500h133M617.500 168v108M623.500 168v108M740.500 168v125M833.500 330v334" stroke="#ffbcbc" fill="none"/>
        <path d="M872 287h17v2h-17zM872 290h17v1h-17zM872 297h17v1h-17z" fill="#8a0060" opacity=".7"/>
        <path d="M834 648h5v16h-5z" fill="#ccc"/>
        <g fill="none" stroke="#a6a6a6" stroke-width="5">
          <path d="M882 372l20 1 62-8v43l-62-6-20 1z" fill="#a6a6a6" stroke="none"/>
          <path d="M908 378h36M908 395h36" stroke="#fff" stroke-width="1"/><path d="M910 387h15M930 387h17" stroke="#fff" stroke-width="8"/>
          <path d="M966 338q-8 8-7 24v46q0 20 7 26M928 372v56q0 6-3 4M968 358h19M968 384h19M968 391h19M968 415h19"/>
          <ellipse cx="848" cy="387" rx="25" ry="32"/><ellipse cx="856" cy="387" rx="29" ry="32"/><ellipse cx="852" cy="387" rx="17" ry="26"/><ellipse cx="864" cy="387" rx="18" ry="24"/><ellipse cx="868" cy="387" rx="10" ry="16"/>
          <path d="M289.500 602v70M965.500 602v70"/>
        </g>
        <g fill="none" stroke="#5470b0" stroke-width="6">
          <path d="M290 171h676v429H290z"/>
          <path d="M393 213.500h377c85 0 154 77 154 172s-69 171-154 171H393q-60 0-60-61V273.500q0-60 60-60z"/>
          <circle cx="401" cy="385" r="12" fill="#fff" stroke-width="7"/>
        </g>
        <path d="M405 384v12l3-3 2 5 2-1-2-5h4z" fill="#fff" stroke="#333" stroke-width=".8"/>
      </svg>
      <div class="nav">
        <svg viewBox="0 0 24 78"><circle cx="18" cy="5" r="2" fill="none" stroke="#999"/><circle cx="10" cy="21" r="6" fill="#eee" stroke="#888"/><circle cx="10" cy="21" r="2.500" fill="#fff" stroke="#888"/><path d="M12 25h7v4h-7z" fill="#cfe0f2" stroke="#7a9cc4"/><path d="M8 34h4l-2 2zM8 62h4l-2 2z" fill="#666"/><path d="M2 39h20" stroke="#bbb"/><path d="M6 45h7v7H6z" fill="#9cbf8c" stroke="#7b996e"/><circle cx="13" cy="51" r="2.500" fill="#fff" stroke="#888"/><path d="M14 53l4 4" stroke="#888"/><circle cx="18" cy="73" r="2" fill="none" stroke="#999"/></svg>
      </div>
      <div class="vs"><svg><use href="#up"/></svg><i></i><svg class="end"><use href="#down"/></svg></div>
    </div>
    <div class="vcb">
      <button class="scale">1 : 50</button>
      <button aria-label="Nivel de detalle"><svg><use href="#detail"/></svg></button>
      <button aria-label="Estilo visual"><svg><use href="#box"/></svg></button>
      <button aria-label="Camino de sol"><svg><use href="#sun"/></svg></button>
      <button aria-label="Sombras"><svg><use href="#shadow"/></svg></button>
      <button aria-label="Recorte"><svg><use href="#cropx"/></svg></button>
      <button aria-label="Región de recorte"><svg><use href="#crop"/></svg></button>
      <button aria-label="Ocultar temporalmente"><svg><use href="#glass"/></svg></button>
      <button aria-label="Mostrar ocultos"><svg><use href="#bulb"/></svg></button>
      <button aria-label="Propiedades temporales"><svg><use href="#dots"/></svg></button>
      <button aria-label="Modelo analítico"><svg><use href="#people"/></svg></button>
      <button aria-label="Restricciones"><svg><use href="#lock"/></svg></button>
      <svg viewBox="0 0 10 10"><path d="M6 3L4 5l2 2" fill="none" stroke="#222" stroke-width="1.400"/></svg>
      <div class="hs"><i></i></div>
      <svg viewBox="0 0 10 10"><path d="M4 3l2 2-2 2" fill="none" stroke="#222" stroke-width="1.400"/></svg>
    </div>
  </section>

  <aside class="browser">
    <header class="ph"><h2>Navegador de proyectos - IS-1709-MIG.rvt</h2><button aria-label="Cerrar navegador"><svg><use href="#x"/></svg></button></header>
    <div class="bb">
      <ul class="tree">
        <li class="a"><button class="mi" aria-label="Contraer"></button><svg><use href="#views"/></svg>Vistas (all)</li>
        <li class="b"><button class="mi" aria-label="Contraer"></button>Planos de planta (Floor Plan)</li>
        <li class="c"><i></i>01 Primer Nivel NPT+0.00m</li>
        <li class="c"><i></i>02 Segundo Nivel NPT+2.70m</li>
        <li class="c"><i></i>03 Tercer Nivel NPT+5.40m</li>
        <li class="c"><i></i><b>Instalaciones Sanitarias - Primer Nivel</b></li>
        <li class="c"><i></i>Primer Nivel -&nbsp; Desague</li>
        <li class="c"><i></i>Primer Nivel - Suministro de agua</li>
        <li class="c"><i></i>Segundo Nivel - Desague</li>
        <li class="c"><i></i>Segundo Nivel - Suministro de Agua</li>
        <li class="c"><i></i>Tercer Nivel - Suministro de agua</li>
        <li class="b"><button aria-label="Expandir"></button>Vistas 3D (3D View)</li>
        <li class="b"><button aria-label="Expandir"></button>Alzados (Rendel - Elevacion Exterior)</li>
        <li class="a"><i></i><svg><use href="#legend"/></svg>Leyendas</li>
        <li class="a"><i></i><svg><use href="#sched"/></svg>Tablas de planificación/Cantidades (todo)</li>
        <li class="a"><button class="mi" aria-label="Contraer"></button><svg><use href="#sheetp"/></svg>Planos (all)</li>
        <li class="b"><i></i>000 - Vista Inicial</li>
        <li class="b"><button aria-label="Expandir"></button>IS- 01 - Primera Planta</li>
        <li class="a"><button class="mi" aria-label="Contraer"></button><svg><use href="#fam"/></svg>Familias</li>
        <li class="b"><button aria-label="Expandir"></button>Accesorios de tuberías</li>
        <li class="b"><button class="mi" aria-label="Contraer"></button>Aparatos sanitarios</li>
        <li class="c"><button aria-label="Expandir"></button>Bañera-Rectangular-3D</li>
        <li class="c"><button aria-label="Expandir"></button>IS - Bañera en esquina</li>
        <li class="c"><button aria-label="Expandir"></button>IS-Ducha</li>
        <li class="c"><button aria-label="Expandir"></button>IS-Inodoro Tanque</li>
        <li class="c"><button aria-label="Expandir"></button>IS-Lavador-Simple</li>
        <li class="c"><button aria-label="Expandir"></button>IS-Lavatorio Oval</li>
        <li class="c"><button aria-label="Expandir"></button>Sanitario-Caja de Registro</li>
        <li class="c"><button aria-label="Expandir"></button>Sanitario-Registro</li>
        <li class="c"><button aria-label="Expandir"></button>Sanitario-Sumidero</li>
        <li class="c"><button aria-label="Expandir"></button>Tanque Alto</li>
        <li class="c"><button aria-label="Expandir"></button>Terma MEP</li>
        <li class="b"><button aria-label="Expandir"></button>Bandejas de cables</li>
        <li class="b"><button aria-label="Expandir"></button>Barandillas</li>
        <li class="b"><button aria-label="Expandir"></button>Cimentación estructural</li>
        <li class="b"><button aria-label="Expandir"></button>Conductos</li>
        <li class="b"><button aria-label="Expandir"></button>Conductos flexibles</li>
        <li class="b"><button aria-label="Expandir"></button>Cubiertas</li>
        <li class="b"><button aria-label="Expandir"></button>Elementos de detalle</li>
        <li class="b"><button aria-label="Expandir"></button>Escaleras</li>
        <li class="b"><button aria-label="Expandir"></button>Montantes de muro cortina</li>
        <li class="b"><button aria-label="Expandir"></button>Muros</li>
        <li class="b"><button aria-label="Expandir"></button>Paneles de muro cortina</li>
        <li class="b"><button aria-label="Expandir"></button>Patrón</li>
        <li class="b"><button aria-label="Expandir"></button>Perfiles</li>
        <li class="b"><button aria-label="Expandir"></button>Rampas</li>
      </ul>
      <div class="sb"><svg><use href="#up"/></svg><i class="th tall"></i><i class="rest"></i><svg><use href="#down"/></svg></div>
    </div>
  </aside>
</main>

<footer class="status">
  <span class="msg">Aparatos sanitarios : Bañera-Rectangular-3D : 1525x 762 mm</span>
  <svg><use href="#people"/></svg>
  <span class="combo w136"><select aria-label="Subproyecto"><option></option></select><svg><use href="#down"/></svg></span>
  <svg class="ml"><use href="#key"/></svg><span class="cnt">:0</span>
  <svg><use href="#wins"/></svg><svg class="ml3"><use href="#optset"/></svg>
  <span class="combo w136 ml3"><select aria-label="Opción de diseño"><option>Modelo base</option></select><svg><use href="#down"/></svg></span>
  <span class="sicons"><svg><use href="#chain"/></svg><svg><use href="#selx"/></svg><svg><use href="#pin"/></svg><svg><use href="#selx"/></svg><svg><use href="#drag"/></svg><svg><use href="#ring"/></svg><svg><use href="#funnel"/></svg></span><span>:0</span>
</footer>

<footer class="taskbar">
  <div class="apps">
    <button aria-label="Inicio"><svg viewBox="0 0 18 18"><path d="M3 5l5-1v5H3zM9 4l6-1v6H9zM3 10h5v5l-5-1zM9 10h6v6l-6-1z" fill="#fff"/></svg></button>
    <button aria-label="Buscar"><svg viewBox="0 0 18 18"><circle cx="11" cy="7" r="4" fill="none" stroke="#fff" stroke-width="1.200"/><path d="M8 10l-5 5" stroke="#fff" stroke-width="1.300"/></svg></button>
    <button aria-label="Vista de tareas"><svg viewBox="0 0 18 18"><path d="M4 3v2h6V3M4 15v-2h6v2M4 7h6v4H4zM13 3v12M12 8h3" fill="none" stroke="#fff" stroke-width="1.200"/></svg></button>
    <button class="run" aria-label="Explorador"><svg viewBox="0 0 18 18"><path d="M2 3h6l1 2h7v11H2z" fill="#f6dc88"/><path d="M4 16v-6h10v6h-3v-3H7v3z" fill="#43a4e0"/></svg></button>
    <button class="run" aria-label="Excel"><svg viewBox="0 0 18 18"><path d="M9 3h7v12H9z" fill="#f2f7f3" stroke="#207245"/><path d="M10 6h5M10 9h5M10 12h5M12.500 4v10" stroke="#207245"/><path d="M1 3l9-2v16l-9-2z" fill="#1d7044"/><path d="M3 6l4 6M7 6l-4 6" stroke="#fff" stroke-width="1.400"/></svg></button>
    <button aria-label="Chrome"><svg><use href="#chrome"/></svg></button>
    <button aria-label="Revit"><svg><use href="#revit"/></svg></button>
    <button class="run" aria-label="Acrobat"><svg viewBox="0 0 18 18"><path d="M2 1h14v15H2z" fill="#c41212"/><path d="M9 4q-1 5-5 8 4-3 10-2-4-1-5-6z" fill="none" stroke="#fff" stroke-width="1.200"/></svg></button>
    <button class="run" aria-label="Chrome, perfil"><svg viewBox="0 0 18 18"><use href="#chrome"/><circle cx="13" cy="13" r="4" fill="#b9b9b9"/></svg></button>
    <button class="run act" aria-label="Revit 2019"><svg><use href="#revit"/></svg></button>
    <button class="run" aria-label="Pizarra"><svg viewBox="0 0 18 18"><path d="M1 1h16v16H1z" fill="#0d6f72"/><path d="M4 4h11v8H4zM3 14h4M10 12l3 3" fill="none" stroke="#fff" stroke-width="1.400"/></svg></button>
    <button class="run" aria-label="AutoCAD"><svg viewBox="0 0 18 18"><path d="M1 1h16v16H1z" fill="#f4ecec"/><path d="M8 3h3l4 12h-3l-1-3H7l-1 3H3zM9.500 6L8 10h3z" fill="#b21f26" fill-rule="evenodd"/></svg></button>
    <button class="run" aria-label="Internet Explorer"><svg viewBox="0 0 18 18"><path d="M14 12q-2 3-5 3-5 0-5-6t5-5q5 0 5 6H5" fill="none" stroke="#5cc3f2" stroke-width="2.500"/><path d="M2 16q-2-3 4-9t10-5q1 1-1 3" fill="none" stroke="#f3cf4a" stroke-width="1.400"/></svg></button>
  </div>
  <div class="clock">22:10<br>30/07/2019</div>
</footer>

<div class="kb" aria-hidden="true">
  <div class="kr"><kbd>`</kbd><kbd>1</kbd><kbd>2</kbd><kbd>3</kbd><kbd>4</kbd><kbd>5</kbd><kbd>6</kbd><kbd>7</kbd><kbd>8</kbd><kbd>9</kbd><kbd>0</kbd><kbd>-</kbd><kbd>=</kbd><kbd class="k2">⌫</kbd></div>
  <div class="kr"><kbd class="k2">Tab ⇆</kbd><kbd>Q</kbd><kbd>W</kbd><kbd>E</kbd><kbd>R</kbd><kbd>T</kbd><kbd>Y</kbd><kbd>U</kbd><kbd>I</kbd><kbd>O</kbd><kbd>P</kbd><kbd>[</kbd><kbd>]</kbd><kbd>\</kbd></div>
  <div class="kr"><kbd class="k2">Caps</kbd><kbd>A</kbd><kbd>S</kbd><kbd>D</kbd><kbd>F</kbd><kbd>G</kbd><kbd>H</kbd><kbd>J</kbd><kbd>K</kbd><kbd>L</kbd><kbd>;</kbd><kbd>'</kbd><kbd class="k2">↵</kbd></div>
  <div class="kr"><kbd class="k25">⇧ Shift</kbd><kbd>Z</kbd><kbd>X</kbd><kbd>C</kbd><kbd>V</kbd><kbd>B</kbd><kbd>N</kbd><kbd>M</kbd><kbd>,</kbd><kbd>.</kbd><kbd>/</kbd><kbd class="k25">⇧ Shift</kbd></div>
  <div class="kr"><kbd class="k13">Ctrl</kbd><kbd class="k13"><svg class="win" viewBox="0 0 6 6"><path d="M0 0h3v3H0zM3 0h3v6H0V3h3z" fill="#fff"/></svg></kbd><kbd class="k13">Alt</kbd><kbd class="k6"></kbd><kbd class="k13">Alt</kbd><kbd class="k13"><svg class="win" viewBox="0 0 6 6"><path d="M0 0h3v3H0zM3 0h3v6H0V3h3z" fill="#fff"/></svg></kbd><kbd class="k13">☰</kbd><kbd class="k13">Ctrl</kbd></div>
</div>
<div class="arrows" aria-hidden="true"><kbd class="u">↑</kbd><kbd>←</kbd><kbd>↓</kbd><kbd>→</kbd></div>
<div class="mouse" aria-hidden="true"><i></i></div>
<div class="brand">
  <svg viewBox="0 0 104 64"><path d="M46 3H21L4 32l17 28h25V44H33l-6-12 6-12h13zM58 3h25l17 29-17 28H58V44h13l6-12-6-12H58z" fill="none" stroke="#f49d1a" stroke-width="6"/></svg>
  <span>escuela de</span><strong>CONSTRUCCION</strong><strong class="big">DIGITAL</strong>
</div>
</body>
</html>
```

FILE: styles.css
```css
* { box-sizing: border-box; }
html, body { margin: 0; height: 100%; }
body {
  position: relative;
  display: flex;
  flex-direction: column;
  min-height: 100vh;
  overflow: hidden;
  background: #ecedeb;
  color: #2b2b2b;
  font: 8px/10px Roboto, "Open Sans", "Noto Sans", sans-serif;
}
.defs { position: absolute; width: 0; height: 0; }
button, input, select { font: inherit; color: inherit; margin: 0; padding: 0; border: 0; background: none; border-radius: 0; }
button { display: flex; align-items: center; white-space: nowrap; }
h1, h2 { margin: 0; font: inherit; }
svg { display: block; flex: none; }
.t8 { width: 8px; height: 8px; }
.off { opacity: .5; }

/* title bar */
.titlebar { display: flex; align-items: center; height: 18px; flex: none; background: #c9cac8; }
.qat, .info { display: flex; align-items: center; flex: none; }
.info { padding-right: 1px; }
.titlebar button { width: 16px; height: 16px; justify-content: center; flex: none; }
.titlebar button svg { width: 12px; height: 12px; }
.titlebar button.ar { width: 8px; }
.titlebar button.ar svg { width: 8px; height: 8px; }
.titlebar button.dis { opacity: .5; }
.titlebar button.big { font-size: 12px; font-weight: 700; }
.s3 { width: 3px; }
.s6 { width: 6px; }
.sep { width: 1px; height: 13px; margin: 0 2px; background: #b2b3b1; }
.info .sep { margin: 0 4px; }
.titlebar h1 { flex: 1; text-align: center; white-space: nowrap; }
.info input { width: 120px; height: 15px; padding: 0 2px; background: #fff; border: 1px solid #777; font-style: italic; }
.info input::placeholder { color: #777; }
.tiny { width: 8px; height: 8px; }
.usr { width: 57px; padding-left: 1px; }

/* ribbon tabs */
.tabs { display: flex; align-items: stretch; height: 15px; flex: none; background: #c9cac8; }
.tabs button { padding: 0 6px 0 7px; }
.tabs .file { padding: 0 6px; background: #1e74b0; color: #fff; margin-right: 2px; }
.tabs .on { background: #ecedeb; }
.pill { width: 18px; height: 10px; margin: 3px 0 0 auto; }

/* ribbon */
.ribbon {
  display: grid;
  grid-template-columns: 57fr 288fr 111fr 373fr 228fr 223fr;
  height: 64px;
  flex: none;
  margin-bottom: 17px;
  border-bottom: 1px solid #cfd0ce;
}
.rp { position: relative; display: flex; flex-direction: column; min-width: 0; border-right: 1px solid #dcdddb; }
.rp.last { border-right: 0; }
.rb { display: flex; height: 48px; padding: 2px 0 0 5px; }
.rp:first-child .rb { padding-left: 10px; }
.rp h2 { display: flex; justify-content: center; align-items: center; height: 16px; }
.rp.last h2 { padding-right: 10px; }
.lg { position: relative; flex-direction: column; flex: none; padding-top: 2px; text-align: center; justify-content: flex-start; }
.lg svg { width: 20px; height: 20px; margin-bottom: 3px; }
.lg .t8 { width: 8px; height: 8px; margin: 0; }
.lg .side { position: absolute; right: -4px; bottom: 8px; }
.cur { height: 48px; background: #b5d8f7; border: 1px solid #4d8fc8; padding-top: 1px; }
.w24 { width: 24px; } .w26 { width: 26px; } .w30 { width: 30px; } .w34 { width: 34px; }
.w38 { width: 38px; } .w42 { width: 42px; } .w46 { width: 46px; } .w50 { width: 50px; } .w52 { width: 52px; }
.col { display: flex; flex-direction: column; }
.col button { height: 16px; gap: 3px; }
.col svg { width: 11px; height: 11px; }
.col .t8 { width: 8px; height: 8px; }
.c80 { width: 80px; } .c75 { width: 75px; } .c40 { width: 40px; } .c95 { width: 95px; }
.launch { position: absolute; right: 1px; bottom: 4px; width: 6px; height: 6px; }
.vsep { width: 1px; margin: 0 4px; background: #cfd0ce; }

/* main area */
main { display: flex; flex: 1; min-height: 0; background: #c9cac8; }
.ph { display: flex; align-items: center; justify-content: space-between; height: 15px; flex: none; padding: 1px 0 0 2px; background: #ecedeb; border-top: 1px solid #bfc0be; color: #444; }
.ph svg { width: 10px; height: 10px; }

.props { display: flex; flex-direction: column; width: 244px; flex: none; background: #ecedeb; border-right: 2px solid #d4d5d3; }
.type { height: 48px; padding: 1px 0; border: 1px solid #d6d7d5; color: #444; text-align: left; }
.thumb { display: flex; align-items: center; justify-content: center; width: 46px; height: 44px; border: 1px solid #d9dad8; }
.thumb svg { width: 22px; height: 22px; }
.tn { flex: 1; padding-left: 2px; }
.inst { display: flex; align-items: center; height: 16px; gap: 5px; padding-left: 1px; }
.combo { position: relative; display: flex; flex: none; width: 182px; height: 14px; background: #d9dad9; border: 1px solid #b7b8b6; }
.combo select { flex: 1; min-width: 0; appearance: none; padding: 0 0 0 1px; overflow: hidden; }
.combo svg { position: absolute; right: 0; top: 1px; width: 10px; height: 10px; opacity: .7; pointer-events: none; }
.inst button { gap: 3px; }
.inst button svg { width: 11px; height: 11px; }
.pbody { display: flex; flex: 1; min-height: 0; background: #fff; }
.tablewrap { flex: 1; min-width: 0; overflow: hidden; }
table { width: 100%; table-layout: fixed; border-spacing: 0; }
col.k { width: 112px; } col.b { width: 9px; }
th, td { height: 12px; padding: 0 0 0 1px; line-height: 11px; text-align: left; font-weight: 400; white-space: nowrap; overflow: hidden; border-bottom: 1px dashed #cfcfcf; border-right: 1px dashed #c4c4c4; }
th { padding-left: 4px; }
td { vertical-align: middle; }
.ro { color: #858585; }
td button { display: block; width: 100%; height: 10px; line-height: 8px; text-align: center; background: #dededc; border: 1px solid #a9aaa8; }
td input[type=checkbox] { display: block; appearance: none; width: 9px; height: 9px; margin: 1px; border: 1px solid #555; background: #fff; }
.g th, .g td { background: #dcdddb; border-right: 0; border-bottom-color: #dcdddb; padding-left: 2px; }
.g td { padding: 0; }
.g svg { width: 8px; height: 8px; }
.sb { display: flex; flex-direction: column; width: 10px; flex: none; background: #ecedeb; }
.sb svg { width: 10px; height: 12px; }
.sb .gap { flex: 98; }
.sb .th { flex: 344; background: #c9cac8; }
.sb .tall { flex: 388; }
.sb .rest { flex: 126; }
.pf { display: flex; align-items: center; justify-content: space-between; height: 20px; flex: none; padding: 0 2px; }
.pf a { color: #1f6fc0; }
.pf button { width: 48px; height: 14px; justify-content: center; background: #c9cac8; color: #8a8a8a; }

.work { display: flex; flex-direction: column; flex: 1; min-width: 0; margin-left: 1px; background: #fff; }
.vtabs { display: flex; height: 15px; flex: none; background: #c9cac8; color: #555; }
.vtabs button { padding-left: 3px; gap: 5px; }
.vtabs svg { width: 11px; height: 11px; }
.vtabs button:nth-child(1) { width: 95px; }
.vtabs button:nth-child(2) { width: 85px; padding-left: 2px; }
.vtabs button:nth-child(3) { width: 132px; }
.vtabs button:nth-child(4) { width: 113px; }
.vtabs .on { width: 162px; background: #fdfdfd; color: #111; font-weight: 700; }
.vtabs .cl { width: 10px; margin: 0 2px 0 auto; }
.vtabs .more { width: 8px; height: 8px; margin: 4px 2px 0 auto; }
.cv { position: relative; display: flex; flex: 1; min-height: 0; }
.draw { flex: 1; width: 100%; min-width: 0; height: 100%; background: #fff; }
.nav { position: absolute; right: 12px; top: 1px; width: 24px; height: 78px; background: rgba(236, 237, 235, .5); border: 1px solid #bbb; border-radius: 3px; }
.nav svg { width: 22px; height: 76px; }
.vs { display: flex; flex-direction: column; width: 12px; flex: none; background: #ecedeb; }
.vs svg { width: 10px; height: 12px; }
.vs i { width: 10px; height: 11px; margin: auto 0; background: #c9cac8; }
.vcb { display: flex; align-items: center; height: 14px; flex: none; background: #f0f0ef; padding-right: 13px; }
.vcb button { width: 14px; height: 12px; justify-content: center; }
.vcb .scale { width: 52px; padding-left: 6px; }
.vcb svg { width: 11px; height: 11px; }
.hs { flex: 1; height: 10px; }
.hs i { display: block; width: 11px; height: 10px; margin: 0 auto; background: #c9cac8; }

.browser { display: flex; flex-direction: column; width: 278px; flex: none; margin-left: 2px; background: #ecedeb; }
.bb { display: flex; flex: 1; min-height: 0; background: #fff; }
.tree { flex: 1; min-width: 0; margin: 0; padding: 0; overflow: hidden; list-style: none; white-space: nowrap; background: linear-gradient(#b5b5b5 50%, transparent 50%) 6px 6px / 1px 4px repeat-y; }
.tree li { display: flex; align-items: center; height: 12px; padding-left: 3px; }
.tree .b { padding-left: 16px; background: linear-gradient(#b5b5b5 50%, transparent 50%) 19px 0 / 1px 4px repeat-y; }
.tree .c { padding-left: 30px; background: linear-gradient(#b5b5b5 50%, transparent 50%) 19px 0 / 1px 4px repeat-y, linear-gradient(#b5b5b5 50%, transparent 50%) 33px 0 / 1px 4px repeat-y; }
.tree svg { width: 11px; height: 11px; margin-right: 4px; }
.tree button { width: 7px; height: 7px; margin-right: 8px; flex: none; border: 1px solid #aaa; background: linear-gradient(#555, #555) center / 3px 1px no-repeat, linear-gradient(#555, #555) center / 1px 3px no-repeat, #fff; }
.tree .mi { background: linear-gradient(#555, #555) center / 3px 1px no-repeat, #fff; }
.tree i { width: 10px; height: 1px; margin: 0 2px 0 3px; flex: none; background: linear-gradient(90deg, #b5b5b5 50%, transparent 50%) 0 0 / 2px 1px; }
.tree .a button { margin-right: 4px; }
.tree .a i { width: 7px; margin: 0 1px 0 3px; }
.tree b { background: #dcdddb; height: 12px; line-height: 12px; font-weight: 700; }

/* status bar */
.status { display: flex; align-items: center; height: 16px; flex: none; background: #c9cac8; border-top: 1px solid #dfe0de; }
.status > svg, .sicons svg { width: 12px; height: 12px; }
.msg { width: 600px; padding-left: 1px; flex: none; }
.status .combo { height: 13px; background: #fff; border-color: #ddd; color: #777; }
.status .combo.w136 { width: 136px; margin-left: 4px; }
.status .ml { margin-left: 6px; }
.status .ml3, .status .combo.ml3 { margin-left: 5px; }
.cnt { width: 23px; }
.sicons { display: flex; gap: 5px; margin-left: auto; }
.status > span:last-child { width: 50px; }

/* taskbar */
.taskbar { display: flex; justify-content: space-between; height: 26px; flex: none; background: #2f230b; color: #fff; }
.apps { display: grid; grid-template-columns: repeat(13, 1fr); width: 425px; }
.apps button { justify-content: center; margin: 0 3px; border-bottom: 2px solid transparent; }
.apps svg { width: 17px; height: 17px; }
.apps .run { border-bottom-color: #76b0de; }
.apps .act { margin: 0; background: #584e3a; }
.clock { padding: 1px 4px 0 0; text-align: right; line-height: 12px; }

/* input overlay */
kbd { display: flex; align-items: center; justify-content: center; flex: 1; min-width: 0; border: 1px solid rgba(255, 255, 255, .45); border-radius: 4px; background: rgba(0, 0, 0, .21); color: #fff; font: 700 6px/8px "Open Sans", "DejaVu Sans", sans-serif; }
.win { width: 6px; height: 6px; }
.kb { position: absolute; right: 251px; bottom: 50px; display: flex; flex-direction: column; gap: 2px; width: 370px; height: 114px; pointer-events: none; }
.kr { display: flex; flex: 1; gap: 1px; }
.k2 { flex: 0 0 49px; } .k25 { flex: 0 0 61px; } .k13 { flex: 0 0 31px; } .k6 { flex: 1; }
.arrows { position: absolute; right: 150px; bottom: 49px; display: grid; grid-template-columns: repeat(3, 1fr); grid-template-rows: 1fr 1fr; gap: 1px; width: 90px; height: 53px; pointer-events: none; }
.arrows .u { grid-column: 2; }
.arrows kbd:nth-child(2) { grid-column: 1; }
.mouse { position: absolute; right: 157px; bottom: 112px; width: 69px; height: 97px; border: 1px solid #b5b5b5; border-radius: 18px; background: linear-gradient(#bbb, #bbb) 0 55px / 100% 1px no-repeat, rgba(255, 255, 255, .25); box-shadow: 0 2px 3px rgba(0, 0, 0, .3); pointer-events: none; }
.mouse i { display: block; width: 11px; height: 43px; margin: 9px auto; border: 1px solid #aaa; border-radius: 6px; }
.brand { position: absolute; right: 17px; bottom: 74px; display: flex; flex-direction: column; align-items: center; width: 118px; color: #58595b; font-family: Lato, sans-serif; pointer-events: none; }
.brand svg { width: 104px; height: 64px; }
.brand span { font-size: 10px; line-height: 10px; }
.brand strong { font-size: 13px; font-weight: 900; line-height: 11px; }
.brand .big { font-size: 15px; line-height: 12px; }
```
